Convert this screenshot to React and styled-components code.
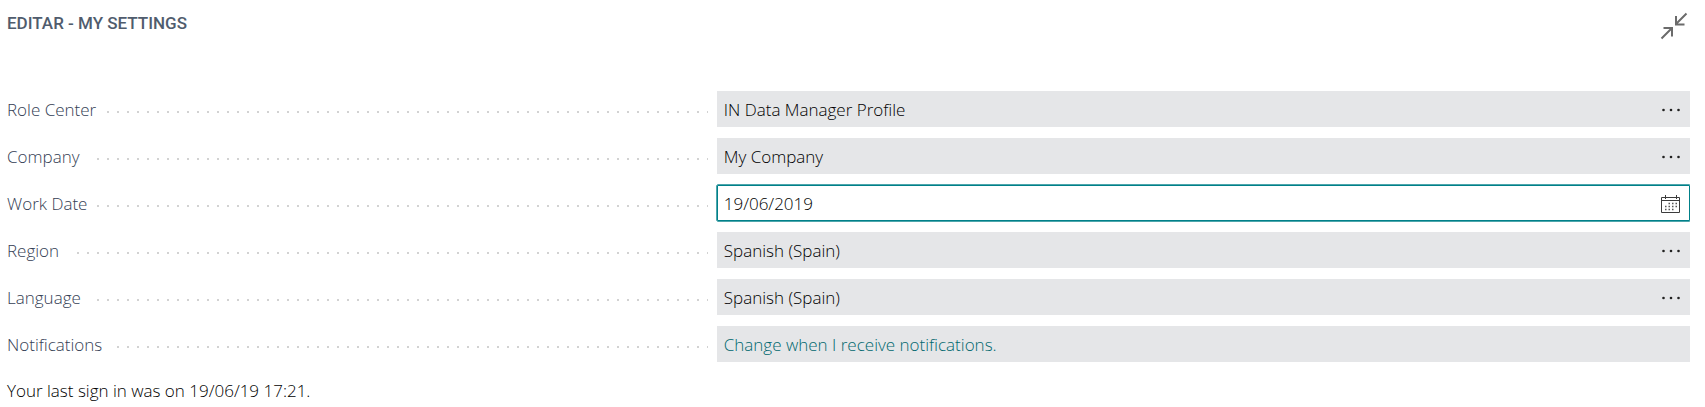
import React from 'react';
import styled, { createGlobalStyle } from 'styled-components';

const GlobalStyle = createGlobalStyle`
  *, *::before, *::after { box-sizing: border-box; }
  body {
    margin: 0;
    background: #fff;
    color: #000;
    font: 300 17px/24px 'Open Sans', 'Noto Sans', sans-serif;
  }
  button, input { font: inherit; color: inherit; }
`;

const Page = styled.main`
  padding: 11px 15px 8px 7px;
`;

const Header = styled.header`
  display: flex;
  justify-content: space-between;
  align-items: flex-start;
  margin-bottom: 50px;
`;

const Title = styled.h1`
  margin: 0;
  color: #505c6d;
  font: 500 17px/24px Roboto, sans-serif;
  text-transform: uppercase;
`;

const IconButton = styled.button`
  display: flex;
  flex: none;
  align-items: center;
  justify-content: center;
  width: 30px;
  height: 30px;
  margin: 0;
  padding: 0;
  border: 0;
  background: none;
  cursor: pointer;
`;

const CollapseButton = styled(IconButton)`
  width: 32px;
`;

const Form = styled.form`
  display: grid;
  row-gap: 11px;
`;

const Row = styled.div`
  display: grid;
  grid-template-columns: 18fr 25fr;
  column-gap: 9px;
  height: 36px;
`;

const Leader = styled.div`
  display: flex;
  align-items: center;
  padding-top: 2px;
  background: linear-gradient(90deg, #d2d2d2 2px, transparent 2px) 0 20px / 10px 2px repeat-x;
`;

const Label = styled.label`
  padding-right: 10px;
  background: #fff;
  color: #344054;
`;

const Field = styled.div`
  display: flex;
  align-items: center;
  min-width: 0;
  padding: 2px 4px 0 7px;
  border-radius: ${({ $active }) => ($active ? '1px' : '0')};
  background: ${({ $active }) => ($active ? '#fff' : '#e5e6e8')};
  box-shadow: ${({ $active }) => ($active
    ? '-1px 0 #4da6ac, 0 -1px #4da6ac, 0 1px #4da6ac, inset 0 0 0 1px #008089'
    : 'none')};
`;

const Input = styled.input`
  flex: 1;
  min-width: 0;
  height: 24px;
  padding: 0;
  border: 0;
  outline: 0;
  background: none;
`;

const Link = styled.a`
  color: #00686f;
  text-decoration: none;
`;

const SignIn = styled.p`
  margin: 17px 0 0;
`;

const CollapseIcon = () => (
  <svg width="28" height="28" viewBox="0 0 28 28" fill="none" stroke="#6b6b6b" strokeWidth="2" aria-hidden="true">
    <path d="M26.500 1.500 16.500 11.500M16 4V12.500H24.500M1.500 26.500 11.500 16.500M3.500 16H12V24.500" />
  </svg>
);

const EllipsisIcon = () => (
  <svg width="18" height="4" viewBox="0 0 18 4" fill="#212121" aria-hidden="true">
    <circle cx="1.500" cy="2" r="1.300" />
    <circle cx="9" cy="2" r="1.300" />
    <circle cx="16.500" cy="2" r="1.300" />
  </svg>
);

const CalendarIcon = () => (
  <svg width="20" height="18" viewBox="0 0 20 18" fill="none" stroke="#3c3c3c" aria-hidden="true">
    <path d="M.5 2.500H18.500V17.500H.5ZM.5 5.500H18.500M4.500 0V4M15.500 0V4" />
    <path d="M7.500 8.500H16M4 11.500H16M4 14.500H13" strokeWidth="1.500" strokeDasharray="1.500 2" stroke="#555" />
  </svg>
);

const fields = [
  { id: 'role', label: 'Role Center', value: 'IN Data Manager Profile' },
  { id: 'company', label: 'Company', value: 'My Company' },
  { id: 'date', label: 'Work Date', value: '19/06/2019', date: true },
  { id: 'region', label: 'Region', value: 'Spanish (Spain)' },
  { id: 'language', label: 'Language', value: 'Spanish (Spain)' },
];

export default function App() {
  return (
    <>
      <GlobalStyle />
      <Page>
        <Header>
          <Title>Editar - My Settings</Title>
          <CollapseButton type="button" aria-label="Collapse"><CollapseIcon /></CollapseButton>
        </Header>
        <Form>
          {fields.map((f) => (
            <Row key={f.id}>
              <Leader><Label htmlFor={f.id}>{f.label}</Label></Leader>
              <Field $active={f.date}>
                <Input id={f.id} type="text" defaultValue={f.value} />
                <IconButton type="button" aria-label={f.date ? 'Open calendar' : `Choose ${f.label}`}>
                  {f.date ? <CalendarIcon /> : <EllipsisIcon />}
                </IconButton>
              </Field>
            </Row>
          ))}
          <Row>
            <Leader><Label as="span" id="notifications">Notifications</Label></Leader>
            <Field>
              <Link href="#notifications" aria-describedby="notifications">Change when I receive notifications.</Link>
            </Field>
          </Row>
        </Form>
        <SignIn>Your last sign in was on 19/06/19 17:21.</SignIn>
      </Page>
    </>
  );
}
